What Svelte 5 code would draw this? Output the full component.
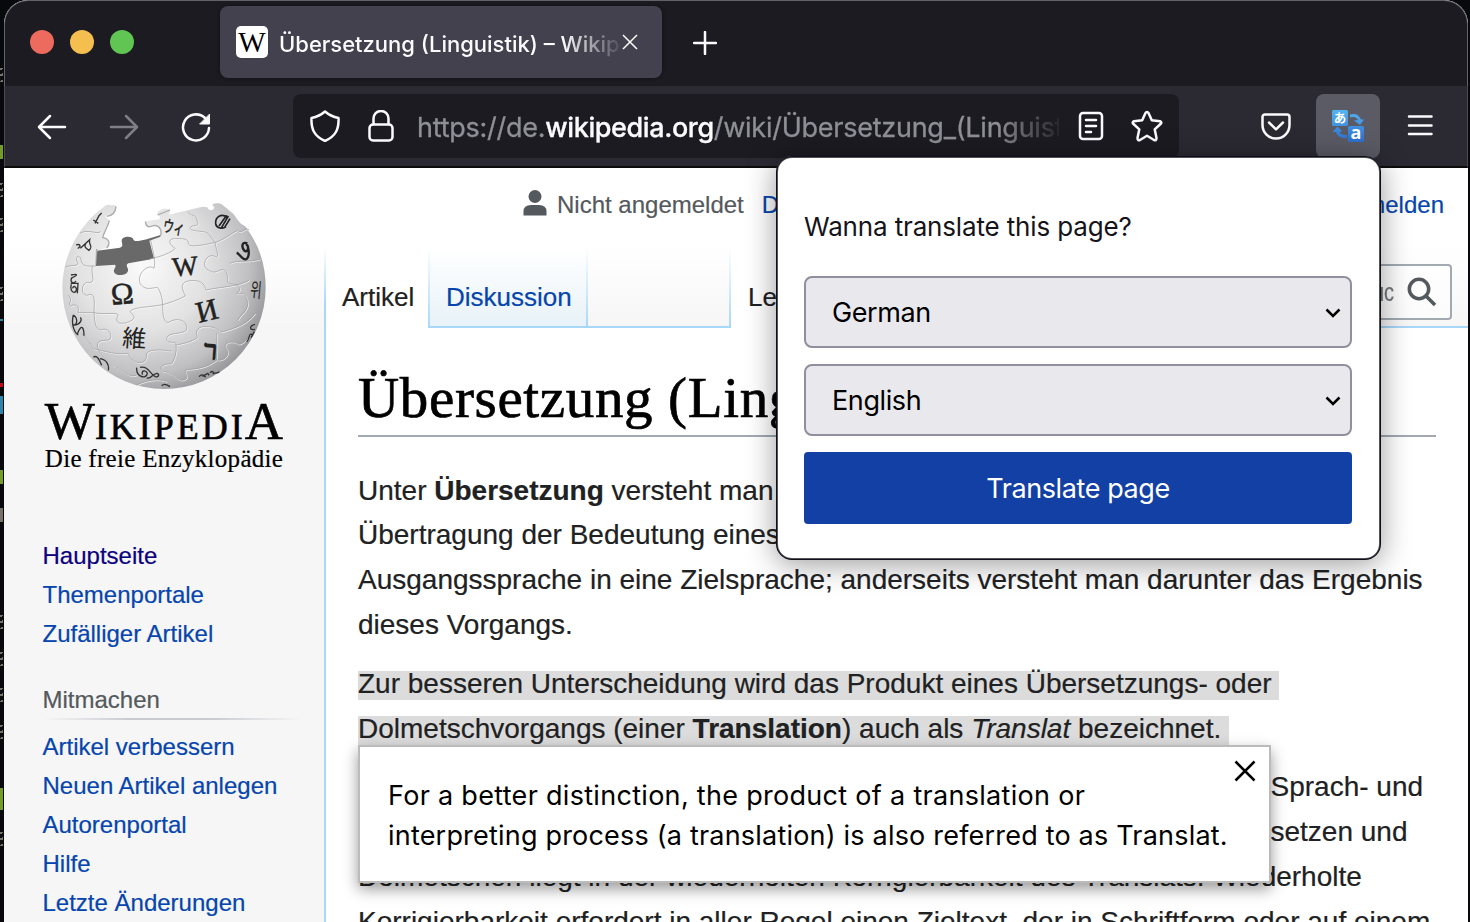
<script>
  const mainLinks = ['Themenportale', 'Zufälliger Artikel'];
  const joinLinks = ['Artikel verbessern', 'Neuen Artikel anlegen', 'Autorenportal', 'Hilfe', 'Letzte Änderungen'];
  const languages = [
    { name: 'German', cls: 'german' },
    { name: 'English', cls: 'english' }
  ];
  const seams = [
    'M195 262 C215 252 240 262 232 245 C222 228 242 225 243 238 C246 262 262 258 288 258',
    'M277 258 C272 285 288 305 270 308 C245 300 238 345 262 346 C285 335 284 360 282 398',
    'M205 345 C222 365 200 370 212 378 C226 370 240 378 234 398 L282 398',
    'M282 398 C310 405 350 395 355 405 C340 430 365 435 388 425 C412 415 400 405 390 395 C400 380 450 382 488 374',
    'M452 180 C460 220 468 240 462 265 C445 250 410 280 420 310 C440 340 470 315 475 325 C485 345 488 360 488 374',
    'M450 236 C480 232 520 215 526 205 C512 198 500 180 520 176 C560 175 565 178 565 192 C570 205 620 192 645 188',
    'M565 95 C570 110 590 100 592 125 C600 145 575 130 570 145 C575 158 620 148 628 165 L645 188',
    'M645 188 C680 175 700 155 712 152 C722 165 735 140 748 150',
    'M645 188 C650 215 658 225 650 232 C620 212 600 260 625 270 C650 290 665 255 678 275 C690 300 675 302 690 312',
    'M488 374 C505 370 535 360 556 348 C548 330 535 305 572 302 C610 298 615 320 618 330 C650 322 720 320 748 300',
    'M690 250 C710 240 740 248 780 238 M690 312 C725 312 725 330 710 340 C730 345 735 330 744 370 C742 395 720 405 714 420',
    'M488 374 C488 405 490 425 505 428 C530 410 565 420 560 450 C545 465 505 455 500 475 C500 495 530 480 528 495 C532 520 520 545 514 552',
    'M282 398 C285 430 285 448 305 450 C320 440 340 460 330 478 C315 485 292 475 292 498 C300 530 330 545 342 560',
    'M245 460 C265 485 270 485 280 506 C320 515 350 525 385 520 C395 550 435 560 440 530 C430 505 490 508 514 514',
    'M514 552 C485 550 475 565 490 575 C520 575 535 615 560 595 C560 575 545 570 570 568 C610 565 630 555 650 540',
    'M528 495 C560 490 585 480 592 473 C585 450 595 438 620 440 C655 440 650 455 670 455 C700 445 740 435 765 400',
    'M650 540 C650 520 652 505 650 460 M650 540 C670 545 690 525 682 510 C665 490 690 480 710 490 C722 500 740 480 752 460',
    'M350 560 C370 575 390 595 410 585 M410 615 C440 600 475 595 500 605 M240 160 C265 145 290 165 302 155'
  ];
</script>

<div class="desktop">
  <div class="bits">
    <i class="w" style="top:68px"></i><i class="g" style="top:145px"></i><i class="w" style="top:183px"></i>
    <i class="w" style="top:218px"></i><i class="w" style="top:287px"></i><i class="b" style="top:319px"></i>
    <i class="r" style="top:383px"></i><i class="b" style="top:396px;height:18px"></i><i class="g" style="top:470px"></i>
    <i class="s" style="top:508px"></i><i class="w" style="top:615px"></i><i class="w" style="top:652px"></i><i class="w" style="top:688px"></i>
    <i class="w" style="top:725px"></i><i class="g" style="top:788px;height:22px"></i><i class="w" style="top:832px"></i>
  </div>
  <div class="window">
    <header class="titlebar">
      <div class="lights"><b class="red"></b><b class="yellow"></b><b class="green"></b></div>
      <div class="tab">
        <span class="favicon">W</span>
        <span class="tabtitle">Übersetzung (Linguistik) – Wikipedia</span>
        <svg class="tabclose" viewBox="0 0 16 16"><path d="M1 1l14 14M15 1L1 15" /></svg>
      </div>
      <svg class="plus" viewBox="0 0 24 24"><path d="M12 1v22M1 12h22" /></svg>
    </header>

    <nav class="toolbar">
      <svg class="ic back" viewBox="0 0 32 32"><path d="M29 16H3M14 5L3 16l11 11" /></svg>
      <svg class="ic forward" viewBox="0 0 32 32"><path d="M3 16h26M18 5l11 11-11 11" /></svg>
      <svg class="ic reload" viewBox="0 0 32 32"><path d="M29 17A13 13 0 1 1 25 7" /><path class="solid" d="M29.5 3.500v9.500H20Z" /></svg>
      <div class="urlbar">
        <svg class="ic" viewBox="0 0 32 32"><path d="M16 1.5C12 5 7 7 2.5 8C2 19 5 26 16 31C27 26 30 19 29.500 8C25 7 20 5 16 1.500Z" /></svg>
        <svg class="ic lock" viewBox="0 0 32 32"><rect x="4.500" y="14.500" width="23" height="16" rx="3.500" /><path d="M8.500 14V8.500a7.500 7.500 0 0 1 15 0V14" /></svg>
        <div class="url"><span class="proto">https://de.</span><span class="host">wikipedia.org</span><span class="path">/wiki/Übersetzung_(Linguistik)</span></div>
        <svg class="ic reader" viewBox="0 0 32 32"><rect x="5" y="3" width="22" height="26" rx="3" /><path d="M11 10h10M11 16h10M11 22h5" /></svg>
        <svg class="ic star" viewBox="0 0 32 32"><path d="M16 2Q17 2 17.500 3L20.800 10.300L29 11.300Q31 12 30 13.500L23.700 19.300L25.500 28Q25.500 31 23 30L16 25.800L9 30Q6.500 31 6.500 28L8.300 19.300L2 13.500Q1 12 3 11.300L11.200 10.300L14.500 3Q15 2 16 2Z" /></svg>
      </div>
      <svg class="ic pocket" viewBox="0 0 32 32"><path d="M5 4.500h22a2.500 2.500 0 0 1 2.500 2.500v8a13.500 13.500 0 0 1-27 0V7A2.500 2.500 0 0 1 5 4.500ZM9 12.500l7 6.800 7-6.800" /></svg>
      <div class="extension">
        <svg viewBox="0 0 32 32">
          <defs><linearGradient id="blue" x1="0" y1="0" x2="0" y2="32" gradientUnits="userSpaceOnUse"><stop stop-color="#55b4f2" /><stop offset="1" stop-color="#2d6fce" /></linearGradient></defs>
          <rect width="16" height="16" rx="1.500" fill="url(#blue)" /><rect x="16" y="16" width="16" height="16" rx="1.500" fill="url(#blue)" />
          <path fill="url(#blue)" d="M18 4.500Q26 2 29 9.500L32 9.500L28 15L22 10.500L26 10Q24 6 18 7.500ZM15 28Q6 29 4 22L0.500 22L5.500 16.500L10.500 21.500L7.500 22Q9 25.500 15 25Z" />
          <text x="8" y="12.500" font-size="12.500" class="ja">あ</text><text x="24" y="29" font-size="18" class="latin">a</text>
        </svg>
      </div>
      <svg class="ic menu" viewBox="0 0 32 32"><path d="M5 6.500h22.500M5 15.500h22.500M5 24h22.500" /></svg>
    </nav>

    <main class="page">
      <aside>
        <div class="logo">
          <svg class="globe" viewBox="180 60 624 576">
            <defs>
              <radialGradient id="ball" cx="425" cy="260" r="430" gradientUnits="userSpaceOnUse">
                <stop stop-color="#fafafa" /><stop offset=".45" stop-color="#e2e2e3" /><stop offset=".75" stop-color="#c0c0c2" /><stop offset="1" stop-color="#858589" />
              </radialGradient>
            </defs>
            <path fill="url(#ball)" d="M318 76A305 305 0 0 0 187 322A305 305 0 0 0 797 322A305 305 0 0 0 737 140L728 134C715 130 703 98 690 94C680 85 665 70 655 70C640 68 632 74 642 80C646 92 625 95 622 82L608 80C570 88 540 95 510 104C503 98 515 92 508 88C495 82 470 90 472 102C475 108 484 110 478 118L436 124C434 138 443 150 450 138C470 128 492 150 482 168L380 205L288 215L296 212L328 200C330 182 320 175 306 172L327 128C330 112 312 115 318 107C340 107 351 90 348 78L340 74C332 80 332 70 318 76Z" />
            <path class="rim" d="M348 79C346 100 335 108 320 109M328 122C322 145 312 155 308 173C328 176 332 190 320 204M290 207L288 256M473 105L510 90M436 125C440 148 450 138 465 136C480 138 486 152 482 166" />
            <path fill="#696969" d="M288 258L292 212L360 203C375 198 360 186 367 176C375 168 398 168 400 178C400 186 416 184 440 178L482 165L481 170L448 182L462 236L385 250C374 257 386 262 384 272C380 289 345 289 342 275C340 265 351 262 345 254Z" />
            <g class="seamlight">{#each seams as d}<path {d} />{/each}</g>
            <g class="seam">{#each seams as d}<path {d} />{/each}</g>
            <g class="glyphs">
              <text x="367" y="372" font-size="92" transform="rotate(-5 367 342)">Ω</text>
              <text x="555" y="286" font-size="82" transform="rotate(-5 557 260)">W</text>
              <text x="621" y="422" font-size="90" transform="rotate(-14 621 394)">И</text>
              <text class="thin" x="403" y="501" font-size="72" transform="rotate(4 403 475)">維</text>
              <text x="522" y="160" font-size="50" textLength="64" lengthAdjust="spacingAndGlyphs" transform="rotate(10 522 140)">ウィ</text>
              <text class="heavy" x="632" y="538" font-size="80" transform="rotate(4 632 515)">ר</text>
              <path class="sign" d="M647 132C645 108 665 100 682 112M657 138L680 106M665 142L685 108M674 142L690 116M647 132C650 145 668 148 678 140" />
              <path class="sign bold" d="M742 190C728 184 722 198 733 212C742 220 750 200 738 192M743 198C752 230 740 244 730 236C722 232 716 220 710 218" />
              <text class="thin" x="768" y="352" font-size="60" textLength="34" lengthAdjust="spacingAndGlyphs" transform="rotate(5 768 330)">위</text>
            </g>
            <path class="marks" d="M285 130l12-23 8-8M280 120l15 10M228 195c12-5 17 5 5 10m8 0l28-26c-4 18 12 18-2 32c-8-5-16-10-10-20M213 285c25-5 18 2 0 10m3-2c-8 12 4 22 12 10m-14 10c-5 20 7 30 14 20c5-10-8-20-10-8M212 310h22l-2 30M220 405c-8 30 5 55 15 60M220 405c15 10 12 30 0 30M222 435c20 0 26-20 18-22M232 462c15-40 20-10 20 5M280 532c10-8 18 5 25 24m-5-20c20 2 28 20 25 35M410 563c-2 30 30 35 32 17c-5-12-20-8-14 4M420 562c25-5 30 20 46 28c10 4 14-10 4-10c-15 2-15 18-30 14M597 590c10-12 18 0 20 2m-10-3c20-10 15-12 20-3M630 578c10-8 10 0 10 3c10-5 15 0 18-6M485 617c10-10 20 0 25 3M765 433c-20 5-15 20 0 15M740 485c10-8 5-25 16-22m-3 10l10-18" />
          </svg>
          <div class="wordmark"><span>W</span><small>IKIPEDI</small><span class="last">A</span></div>
          <div class="slogan">Die freie Enzyklopädie</div>
        </div>
        <div class="links">
          <a class="visited">Hauptseite</a>
          {#each mainLinks as link}<a>{link}</a>{/each}
        </div>
        <h3>Mitmachen</h3>
        <div class="links">{#each joinLinks as link}<a>{link}</a>{/each}</div>
      </aside>

      <section class="body">
        <div class="head">
          <div class="personal">
            <svg viewBox="0 0 24 26"><circle cx="12" cy="6.500" r="6.500" /><path d="M.5 25.500v-4Q.5 15 8 15h8q7.500 0 7.500 6.500v4Z" /></svg>
            <span class="anon">Nicht angemeldet</span><a>Diskussionsseite</a><a class="login">Anmelden</a>
          </div>
          <div class="tabs">
            <span class="t sel">Artikel</span><span class="t disc">Diskussion</span><span class="t gap"></span><span class="t sel read">Lesen</span>
            <div class="search"><span>Suc</span>
              <svg viewBox="0 0 30 30"><circle cx="12" cy="12" r="9.700" /><path d="M19 19l9 9" /></svg>
            </div>
          </div>
        </div>
        <article>
          <h1>Übersetzung (Linguistik)</h1>
          <p><span class="ln">Unter <b>Übersetzung</b> versteht man in der</span><span class="ln">Übertragung der Bedeutung eines Textes</span><span class="ln">Ausgangssprache in eine Zielsprache; anderseits versteht man darunter das Ergebnis</span><span class="ln">dieses Vorgangs.</span></p>
          <p><span class="ln"><mark>Zur besseren Unterscheidung wird das Produkt eines Übersetzungs- oder&nbsp;</mark></span><span class="ln"><mark>Dolmetschvorgangs (einer <b>Translation</b>) auch als <i>Translat</i> bezeichnet.&nbsp;</mark></span></p>
          <p><span class="ln tail">Sprach- und</span><span class="ln tail">setzen und</span><span class="ln">Dolmetschen liegt in der wiederholten Korrigierbarkeit des Translats: Wiederholte</span><span class="ln">Korrigierbarkeit erfordert in aller Regel einen Zieltext, der in Schriftform oder auf einem</span></p>
        </article>
      </section>
    </main>
  </div>

  <div class="popup">
    <div class="question">Wanna translate this page?</div>
    {#each languages as language}
      <div class="select"><span class={language.cls}>{language.name}</span><svg viewBox="0 0 16 10"><path d="M1.500 1.500L8 8l6.500-6.500" /></svg></div>
    {/each}
    <button><span>Translate page</span></button>
  </div>

  <div class="tooltip">
    <div class="tr1">For a better distinction, the product of a translation or</div>
    <div class="tr2">interpreting process (a translation) is also referred to as Translat.</div>
    <svg viewBox="0 0 22 22"><path d="M1.500 1.500l19 19M20.500 1.500l-19 19" /></svg>
  </div>
</div>

<style>
  .desktop { position: relative; width: 1470px; height: 922px; overflow: hidden; background: #08090c; box-sizing: border-box; padding: 0 2px 0 4px; font-family: "Liberation Sans", Arial, sans-serif; }
  .desktop :global(*) { box-sizing: border-box; }
  svg { flex: none; fill: none; }
  span { white-space: nowrap; }
  .bits { position: absolute; left: 0; top: 0; width: 3px; height: 922px; overflow: hidden; }
  .bits i { position: absolute; left: 0; width: 3px; height: 14px; }
  .bits .w { background: repeating-linear-gradient(160deg, #77736a 0 2px, #0c0d10 2px 6px); }
  .bits .s { background: #77736a; }
  .bits .g { background: #769b28; }
  .bits .b { background: #2f83ad; height: 2px; }
  .bits .r { background: #c00b13; height: 4px; }

  .window { height: 922px; border-radius: 24px 24px 0 0; overflow: hidden; display: flex; flex-direction: column; background: #fff; }
  .titlebar { height: 86px; flex: none; background: #1c1b22; display: flex; border: solid #62626a; border-width: 1px 1px 0; border-radius: 24px 24px 0 0; padding: 5px 0 0 25px; }
  .lights { display: flex; gap: 16px; width: 190px; padding-top: 24px; }
  .lights b { width: 24px; height: 24px; border-radius: 50%; }
  .red { background: #ed6a5e; } .yellow { background: #f5bf4f; } .green { background: #61c554; }
  .tab { width: 442px; height: 72px; border-radius: 8px; background: #42414d; box-shadow: 0 0 4px #0007; display: flex; align-items: center; padding: 0 24px 0 16px; }
  .favicon { width: 32px; height: 32px; border-radius: 5px; background: #fff; color: #000; font: 29px/33px "Liberation Serif", serif; display: flex; justify-content: center; }
  .tabtitle { width: 340px; margin-left: 11px; margin-top: 4px; overflow: hidden; font: 500 22px/34px Inter, sans-serif; color: #fbfbfe; -webkit-mask: linear-gradient(90deg, #000 285px, transparent 345px); mask: linear-gradient(90deg, #000 285px, transparent 345px); }
  .tabclose { width: 16px; height: 16px; margin-left: 3px; stroke: #fbfbfe; stroke-width: 1.500; }
  .plus { width: 24px; height: 24px; margin: 25px 0 0 31px; stroke: #fbfbfe; stroke-width: 2.500; stroke-linecap: round; }

  .toolbar { height: 82px; flex: none; background: #2b2a33; border: solid #4c4b54; border-width: 0 1px; border-bottom: 2px solid #0c0c0d; display: flex; align-items: center; padding-left: 31px; }
  .ic { width: 32px; height: 32px; stroke: #fbfbfe; stroke-width: 2.500; stroke-linecap: round; stroke-linejoin: round; }
  .back { margin-top: 2px; }
  .forward { margin: 2px 0 0 40px; opacity: .4; }
  .reload { margin: 2px 0 0 40px; }
  .solid { fill: #fbfbfe; stroke-width: 1; }
  .urlbar { width: 886px; height: 64px; margin-left: 81px; background: #1c1b22; border-radius: 8px; display: flex; align-items: center; padding-left: 16px; }
  .lock { margin-left: 24px; }
  .url { width: 642px; margin: 4px 16px 0 20px; overflow: hidden; white-space: nowrap; display: flex; color: #8f8f97; font: 27px/40px Inter, sans-serif; letter-spacing: -.25px; -webkit-text-stroke: .3px; -webkit-mask: linear-gradient(90deg, #000 580px, transparent 650px); mask: linear-gradient(90deg, #000 580px, transparent 650px); }
  .host { color: #fbfbfe; font-weight: 500; letter-spacing: -.4px; }
  .star { margin-left: 24px; }
  .pocket { margin-left: 81px; }
  .extension { width: 64px; height: 64px; margin: 0 24px; border-radius: 8px; background: #5b5b66; display: grid; place-items: center; }
  .extension svg { width: 32px; height: 32px; }
  .extension text { fill: #fff; text-anchor: middle; font-weight: 700; }
  .ja { font-family: "Noto Sans CJK JP", sans-serif; } .latin { font-family: "Open Sans", sans-serif; }

  .page { flex: 1; display: flex; min-height: 0; background: linear-gradient(#fff 80px, #f6f6f6 160px); -webkit-text-stroke: .2px; }
  aside { width: 322px; flex: none; border-right: 2px solid; border-image: linear-gradient(transparent 80px, #a7d7f9 140px) 1; padding: 32px 22px 0 38.500px; }
  .logo { width: 243px; display: flex; flex-direction: column; align-items: center; height: 335px; }
  .globe { width: 208px; height: 192px; }
  .seam { fill: none; stroke: #98989b; stroke-width: 2; }
  .seamlight { fill: none; stroke: #fff; stroke-width: 3; transform: translate(2px, 2px); opacity: .75; }
  .rim { stroke: #aaa; stroke-width: 4; }
  .glyphs { fill: #222; stroke: #222; stroke-width: 1.500; font-family: "Liberation Serif", "Noto Sans CJK JP", serif; text-anchor: middle; }
  .thin { stroke: none; }
  .heavy { stroke-width: 4; }
  .sign { fill: none; stroke-width: 5; }
  .bold { stroke-width: 7; }
  .marks { stroke: #333; stroke-width: 4; fill: none; }
  .wordmark { height: 50px; display: flex; align-items: baseline; white-space: nowrap; color: #000; font: 53px/58px "Liberation Serif", serif; -webkit-text-stroke: .6px #000; }
  .wordmark small { font-size: 36px; letter-spacing: 3px; }
  .last { margin-left: -1px; }
  .slogan { font: 25px/30px "Liberation Serif", serif; color: #000; white-space: nowrap; letter-spacing: .3px; margin-top: 2px; }
  .links { display: flex; flex-direction: column; padding-top: 7px; }
  .links a { font-size: 24px; line-height: 27px; margin-bottom: 12px; color: #0645ad; white-space: nowrap; }
  .links .visited { color: #0b0080; }
  h3 { margin: 16px 0 6px; height: 45px; padding-top: 11px; font-weight: 400; font-size: 24px; line-height: 28px; color: #54595d; background: linear-gradient(90deg, transparent, #c8ccd1 33%, #c8ccd1 66%, transparent) bottom / 100% 2px no-repeat; }

  .body { flex: 1; min-width: 0; display: flex; flex-direction: column; }
  .head { height: 160px; flex: none; border-bottom: 2px solid #a7d7f9; }
  .personal { height: 80px; padding: 0 24px 6px 197px; display: flex; align-items: center; font-size: 24px; white-space: nowrap; }
  .personal svg { width: 24px; height: 26px; fill: #54595d; margin: -4px 10px 0 0; }
  .anon { color: #54595d; margin-right: 18px; }
  .personal a { color: #0645ad; } .personal .login { margin-left: auto; }
  .tabs { display: flex; height: 80px; }
  .t { display: block; font-size: 26px; line-height: 32px; padding: 33px 15px 0 16px; color: #202122; border-right: 2px solid; border-image: linear-gradient(#fff, #a7d7f9) 1; height: 78px; }
  .sel { background: #fff; height: 80px; width: 104px; }
  .disc { background: linear-gradient(#fff, #e8f2f8); color: #0645ad; width: 158px; }
  .gap { width: 143px; padding: 0; }
  .read { padding-left: 17px; }
  .search { width: 290px; height: 56px; margin: 16px 16px 0 auto; border: 2px solid #a2a9b1; border-radius: 4px; background: #fff9; display: flex; align-items: center; justify-content: flex-end; padding-right: 13px; font-size: 25px; color: #72777d; }
  .search span { transform: scaleX(.8); transform-origin: right; }
  .search svg { width: 30px; height: 30px; margin-left: 13px; stroke: #54595d; stroke-width: 3.500; }
  article { flex: 1; background: #fff; padding: 40px 32px 0; color: #202122; }
  h1 { margin: 0 0 31.600px; height: 69px; border-bottom: 2px solid #a2a9b1; font: 57px/60px "Liberation Serif", serif; letter-spacing: .65px; color: #000; white-space: nowrap; -webkit-text-stroke: .7px #000; }
  p { margin: 0 0 14px; font-size: 28px; line-height: 44.800px; }
  .ln { display: block; }
  mark { background: linear-gradient(#dcdcdc, #dcdcdc) bottom / 100% 29px no-repeat; color: inherit; padding: 0 0 1px; }
  .tail { margin-left: 912.500px; }

  .popup { position: absolute; left: 776px; top: 156px; width: 604.500px; height: 404px; border: 2px solid #52525e; outline: 1px solid #101014; outline-offset: -1px; border-radius: 16px; background: #fff; box-shadow: 0 4px 30px #0006; padding: 51px 26.500px 0 26px; font-family: Inter, sans-serif; color: #15141a; }
  .question { font-size: 26px; line-height: 36px; height: 67px; white-space: nowrap; letter-spacing: -.15px; }
  .select { height: 72px; margin-bottom: 16px; border: 2px solid #8f8f9d; border-radius: 8px; background: #e9e9ed; display: flex; align-items: center; justify-content: space-between; padding: 1px 9px 0 26px; font-size: 27px; color: #000; letter-spacing: -.4px; }
  .select svg { width: 16px; height: 10px; stroke: #000; stroke-width: 2.500; }
  button { width: 100%; height: 72px; border: 0; border-radius: 4px; background: #1340a5; color: #fff; font: 27px Inter, sans-serif; letter-spacing: -.4px; padding: 1px 0 0; }

  .tooltip { position: absolute; left: 358px; top: 745px; width: 913px; height: 138px; border: 2px solid #bbb; background: #fff; box-shadow: 0 6px 14px #0006; padding: 29px 28px; font: 27px/40px Inter, sans-serif; color: #000; white-space: nowrap; }
  .tr1 { letter-spacing: .3px; } .tr2 { letter-spacing: .2px; }
  .tooltip svg { position: absolute; right: 13px; top: 13px; width: 22px; height: 22px; stroke: #000; stroke-width: 2.500; }
</style>
